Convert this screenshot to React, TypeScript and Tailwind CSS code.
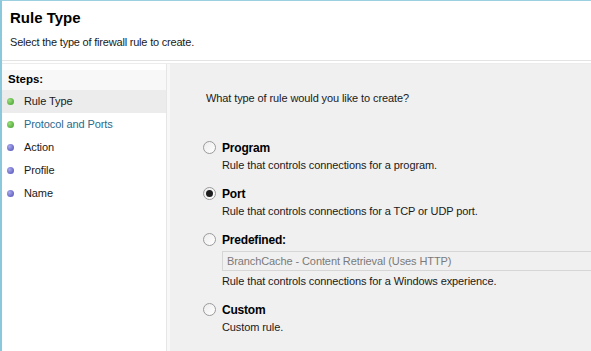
import React from 'react';

const steps = [
  { label: 'Rule Type', done: true, active: true },
  { label: 'Protocol and Ports', done: true, link: true },
  { label: 'Action' },
  { label: 'Profile' },
  { label: 'Name' },
];

function Dot({ green }: { green?: boolean }) {
  return (
    <span
      className={
        'block w-[7px] h-[7px] rounded-full ' +
        (green
          ? 'bg-[radial-gradient(circle_at_35%_35%,#9be07a,#3f9a2c)]'
          : 'bg-[radial-gradient(circle_at_35%_35%,#a9a9f0,#4b4bb0)]')
      }
    />
  );
}

function Radio({ checked }: { checked?: boolean }) {
  return (
    <span className="w-[13px] h-[13px] rounded-full border border-[#9a9a9a] bg-[linear-gradient(135deg,#ececec,#ffffff)] flex items-center justify-center shrink-0">
      {checked && <span className="w-[7px] h-[7px] rounded-full bg-[#1e1e1e]" />}
    </span>
  );
}

function Option({ title, desc, checked, children }: { title: string; desc: string; checked?: boolean; children?: React.ReactNode }) {
  return (
    <div className="flex flex-col">
      <div className="flex items-center gap-[6px] h-[17px]">
        <Radio checked={checked} />
        <span className="font-bold text-[12px] tracking-[-0.2px] text-black">{title}</span>
      </div>
      <div className="pl-[19px] flex flex-col">
        {children}
        <span className="mt-[1px] text-[11px] tracking-[-0.1px] text-[#1a1a1a] leading-[17px]">{desc}</span>
      </div>
    </div>
  );
}

export default function App() {
  return (
    <div className="w-[591px] h-[351px] overflow-hidden flex flex-col bg-white border-l-2 border-l-[#8cc8dc] border-t border-t-[#9ccfe0] font-['Liberation_Sans',Arial,sans-serif] text-[12px]">
      <div className="h-[60px] shrink-0 pl-[8px] pt-[8px] border-b border-b-[#e3e3e3]">
        <div className="text-[15px] font-bold text-black leading-[18px]">Rule Type</div>
        <div className="mt-[8px] text-[11px] tracking-[-0.2px] text-[#1a1a1a] leading-[14px]">Select the type of firewall rule to create.</div>
      </div>
      <div className="h-[3px] shrink-0 bg-white border-b border-b-[#ececec]" />
      <div className="flex flex-1 min-h-0">
        <div className="w-[165px] shrink-0 bg-white border-r border-r-[#e6e6e6] pt-[6px]">
          <div className="font-bold text-[11.5px] text-black pl-[6px] h-[20px] leading-[18px] bg-[#f8f8f8]">Steps:</div>
          <div className="flex flex-col">
            {steps.map((s) => (
              <div
                key={s.label}
                className={'flex items-center h-[23px] pl-[5px] ' + (s.active ? 'bg-[#ececec]' : '')}
              >
                <Dot green={s.done} />
                <span className={'ml-[10px] text-[11px] tracking-[-0.1px] ' + (s.link ? 'text-[#2a6a8e]' : 'text-[#1a1a1a]')}>{s.label}</span>
              </div>
            ))}
          </div>
        </div>
        <div className="w-[3px] shrink-0 bg-[#f8f8f8]" />
        <div className="flex-1 bg-[#f0f0f0] pl-[34px] pt-[26px] flex flex-col">
          <div className="text-[11px] tracking-[-0.1px] text-[#1a1a1a] leading-[16px] pl-[2px]">What type of rule would you like to create?</div>
          <div className="mt-[33px] flex flex-col gap-[11px] -ml-[1px]">
            <Option title="Program" desc="Rule that controls connections for a program." />
            <Option title="Port" desc="Rule that controls connections for a TCP or UDP port." checked />
            <Option title="Predefined:" desc="Rule that controls connections for a Windows experience.">
              <div className="mt-[3px] mb-[1px] h-[20px] w-[400px] border border-[#d6d6d6] bg-[#f0f0f0] pl-[4px] flex items-center text-[11px] tracking-[-0.1px] text-[#7a7a7a]">
                BranchCache - Content Retrieval (Uses HTTP)
              </div>
            </Option>
            <Option title="Custom" desc="Custom rule." />
          </div>
        </div>
      </div>
    </div>
  );
}
